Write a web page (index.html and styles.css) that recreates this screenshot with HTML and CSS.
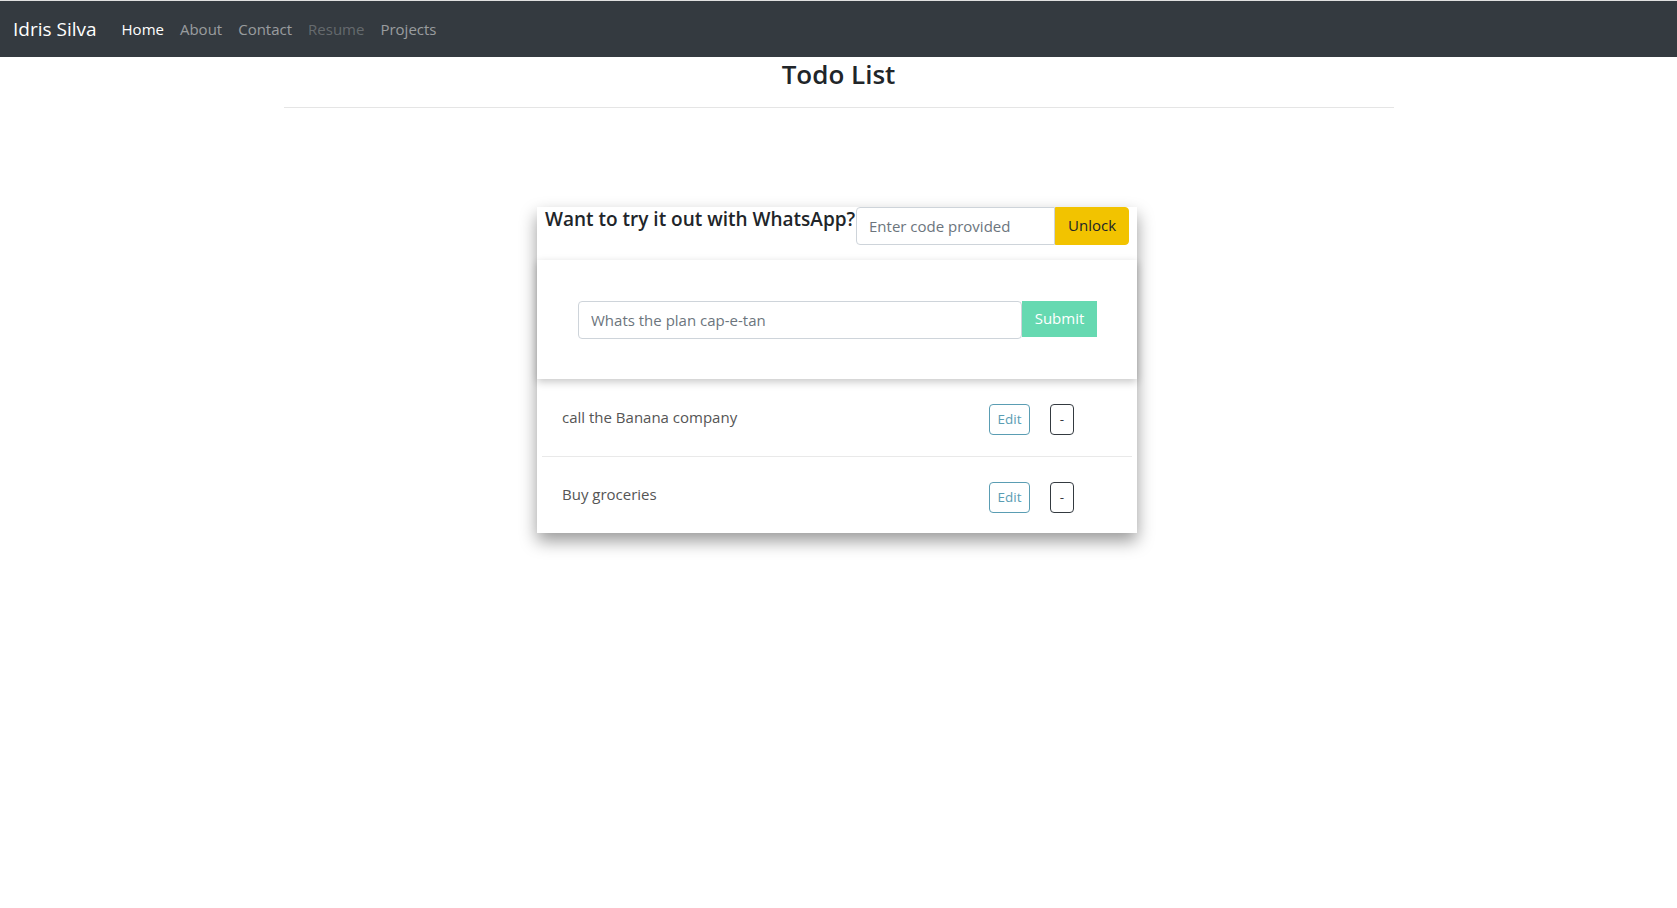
FILE: index.html
```html
<!DOCTYPE html>
<html lang="en">
<head>
<meta charset="utf-8">
<title>Todo List</title>
<link rel="stylesheet" href="styles.css">
</head>
<body>
<nav class="navbar">
  <a class="brand" href="#">Idris Silva</a>
  <ul class="nav">
    <li><a class="nav-link active" href="#">Home</a></li>
    <li><a class="nav-link" href="#">About</a></li>
    <li><a class="nav-link" href="#">Contact</a></li>
    <li><a class="nav-link disabled" href="#">Resume</a></li>
    <li><a class="nav-link" href="#">Projects</a></li>
  </ul>
</nav>
<main class="container">
  <h3 class="page-title">Todo List</h3>
  <hr class="rule">
  <section class="todo-card">
    <header class="card-header">
      <h5 class="card-title">Want to try it out with WhatsApp?</h5>
      <div class="unlock-group">
        <input class="code-input" type="text" placeholder="Enter code provided">
        <button class="btn-unlock" type="button">Unlock</button>
      </div>
    </header>
    <form class="add-form">
      <input class="task-input" type="text" placeholder="Whats the plan cap-e-tan">
      <button class="btn-submit" type="button">Submit</button>
    </form>
    <ul class="todo-list">
      <li class="todo-item">
        <span class="todo-text">call the Banana company</span>
        <div class="actions">
          <button class="btn-edit" type="button">Edit</button>
          <button class="btn-remove" type="button">-</button>
        </div>
      </li>
      <li class="todo-item">
        <span class="todo-text">Buy groceries</span>
        <div class="actions">
          <button class="btn-edit" type="button">Edit</button>
          <button class="btn-remove" type="button">-</button>
        </div>
      </li>
    </ul>
  </section>
</main>
</body>
</html>
```
FILE: styles.css
```css
* { box-sizing: border-box; }

html, body { min-height: 100%; }

body {
  margin: 0;
  min-height: 908px;
  font-family: "Open Sans", "Noto Sans", Arial, sans-serif;
  font-size: 15px;
  line-height: 1.5;
  color: #212529;
  background: #fff;
}

.navbar {
  display: flex;
  align-items: center;
  height: 57px;
  padding: 0 16px 0 13px;
  background: #343a40;
  border-top: 1px solid #e0e0e0;
}

.brand {
  font-size: 19px;
  line-height: 30px;
  color: #fff;
  text-decoration: none;
  margin-right: 17px;
}

.nav {
  display: flex;
  list-style: none;
  margin: 0;
  padding: 0;
}

.nav-link {
  display: block;
  padding: 8px;
  line-height: 24px;
  color: rgba(255, 255, 255, 0.5);
  text-decoration: none;
}

.nav-link.active { color: #fff; }
.nav-link.disabled { color: rgba(255, 255, 255, 0.25); }

.container {
  width: 1110px;
  margin: 0 auto;
  padding-bottom: 120px;
}

.page-title {
  margin: 0;
  font-size: 26px;
  font-weight: 560;
  line-height: 33.6px;
  text-align: center;
  padding-top: 1px;
}

.rule {
  margin: 15px 0 0;
  border: 0;
  border-top: 1px solid rgba(0, 0, 0, 0.1);
}

.todo-card {
  width: 600px;
  margin: 99px 0 0 calc(50% - 301.5px);
  background: #fff;
  box-shadow: 0 8px 16px rgba(0, 0, 0, 0.4);
}

.card-header {
  display: flex;
  align-items: flex-start;
  padding: 0 8px 15px;
}

.card-title {
  flex: 1 1 auto;
  min-width: 0;
  margin: 0;
  font-size: 19px;
  font-weight: 560;
  line-height: 24px;
  white-space: nowrap;
}

.unlock-group {
  display: flex;
  flex: none;
  width: 273px;
}

.code-input {
  width: 199px;
  height: 38px;
  padding: 6px 12px;
  border: 1px solid #ced4da;
  border-radius: 4px 0 0 4px;
  font: inherit;
  color: #495057;
}

.code-input::placeholder,
.task-input::placeholder { color: #6c757d; }

.btn-unlock {
  width: 74px;
  height: 38px;
  padding: 6px 12px;
  border: 1px solid #f2c300;
  border-radius: 0 4px 4px 0;
  background: #f2c300;
  color: #212529;
  font: inherit;
}

.add-form {
  display: flex;
  align-items: flex-start;
  padding: 41px 40px 40px 41px;
  box-shadow: 0 3px 8px rgba(0, 0, 0, 0.22);
}

.task-input {
  width: 444px;
  height: 38px;
  padding: 6px 12px;
  border: 1px solid #ced4da;
  border-radius: 4px;
  font: inherit;
  color: #495057;
}

.btn-submit {
  width: 75px;
  height: 36px;
  border: 0;
  border-radius: 0;
  background: #66d9b1;
  color: #fff;
  font: inherit;
}

.todo-list {
  list-style: none;
  margin: 0;
  padding: 0 5px;
}

.todo-item {
  display: flex;
  align-items: center;
  height: 78px;
  padding: 0 58px 0 20px;
  border-bottom: 1px solid #e9e9e9;
}

.todo-item:last-child {
  height: 76px;
  border-bottom: 0;
}

.todo-text {
  flex: 1;
  color: #555;
}

.actions {
  display: flex;
  gap: 20px;
  margin-top: 5px;
}

.btn-edit,
.btn-remove {
  height: 31px;
  padding: 4px 8px;
  font: inherit;
  font-size: 13.5px;
  line-height: 21px;
  border-radius: 4px;
  background: transparent;
}

.btn-edit {
  width: 41px;
  padding: 4px 0;
  border: 1px solid #5a9db3;
  color: #5a9db3;
}

.btn-remove {
  width: 24px;
  padding: 4px 0;
  border: 1px solid #343a40;
  color: #343a40;
}
```
